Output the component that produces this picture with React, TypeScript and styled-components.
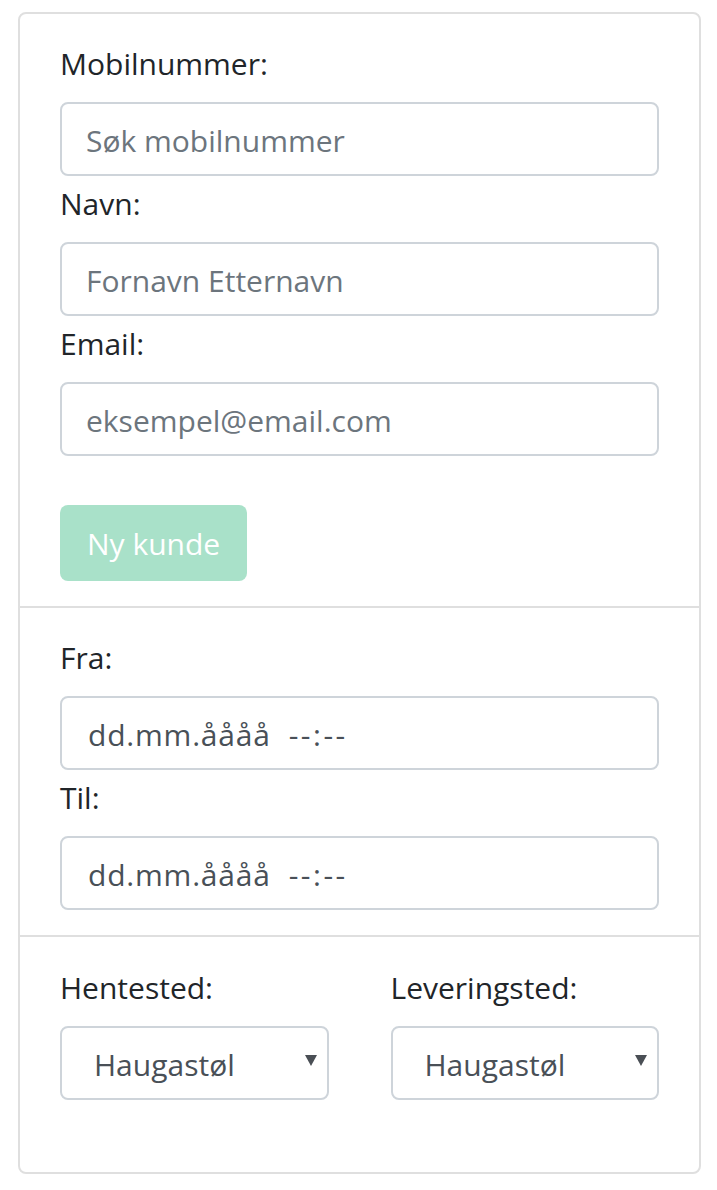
import React from "react";
import styled, { createGlobalStyle } from "styled-components";

const FONT = `"Open Sans", "Noto Sans", "Liberation Sans", sans-serif`;

const GlobalStyle = createGlobalStyle`
  html, body {
    margin: 0;
    padding: 0;
    background: #ffffff;
  }
  body {
    font-family: ${FONT};
    color: #212529;
  }
  * { box-sizing: border-box; }
`;

const Page = styled.div`
  padding: 12px 16px 17px 18px;
`;

const Card = styled.div`
  border: 2px solid #dfdfdf;
  border-radius: 8px;
  background: #fff;
`;

const Section = styled.div<{ $divider?: boolean; $pt: number; $pb: number }>`
  padding: ${(p) => p.$pt}px 40px ${(p) => p.$pb}px;
  border-top: ${(p) => (p.$divider ? "2px solid #dfdfdf" : "none")};
  display: flex;
  flex-direction: column;
`;

const Field = styled.div<{ $gapAfter?: number }>`
  display: flex;
  flex-direction: column;
  margin-bottom: ${(p) => p.$gapAfter ?? 0}px;
`;

const Label = styled.label`
  font-family: ${FONT};
  font-size: 30px;
  line-height: 45px;
  color: #212529;
  margin-bottom: 16px;
`;

const TextInput = styled.input`
  height: 74px;
  width: 100%;
  border: 2px solid #ced4da;
  border-radius: 8px;
  padding: 2px 24px 0;
  font-family: ${FONT};
  font-size: 30px;
  color: #495057;
  background: #fff;
  outline: none;
  &::placeholder {
    color: #6c757d;
    opacity: 1;
  }
`;

const DateBox = styled.div`
  height: 74px;
  width: 100%;
  border: 2px solid #ced4da;
  border-radius: 8px;
  padding: 2px 26px 0;
  display: flex;
  align-items: center;
  gap: 18px;
  font-family: ${FONT};
  font-size: 30px;
  color: #495057;
`;

const DatePart = styled.span<{ $spacing: number }>`
  letter-spacing: ${(p) => p.$spacing}px;
`;

const Button = styled.button`
  align-self: flex-start;
  height: 76px;
  padding: 0 27px;
  border: none;
  border-radius: 8px;
  background: #a9e1c9;
  color: #ffffff;
  font-family: ${FONT};
  font-size: 30px;
  cursor: default;
`;

const Columns = styled.div`
  display: grid;
  grid-template-columns: 1fr 1fr;
  column-gap: 62px;
`;

const SelectBox = styled.div`
  height: 74px;
  border: 2px solid #ced4da;
  border-radius: 8px;
  padding: 2px 10px 0 32px;
  display: flex;
  align-items: center;
  justify-content: space-between;
  font-family: ${FONT};
  font-size: 30px;
  color: #495057;
`;

const Caret = () => (
  <svg width="12" height="11" viewBox="0 0 12 11" style={{ marginTop: -8 }}>
    <polygon points="0,0 12,0 6,11" fill="#4a4f55" />
  </svg>
);

export default function App() {
  return (
    <>
      <GlobalStyle />
      <Page>
        <Card>
          <Section $pt={27} $pb={25}>
            <Field $gapAfter={5}>
              <Label>Mobilnummer:</Label>
              <TextInput placeholder="Søk mobilnummer" />
            </Field>
            <Field $gapAfter={5}>
              <Label>Navn:</Label>
              <TextInput placeholder="Fornavn Etternavn" />
            </Field>
            <Field $gapAfter={49}>
              <Label>Email:</Label>
              <TextInput placeholder="eksempel@email.com" />
            </Field>
            <Button disabled>Ny kunde</Button>
          </Section>
          <Section $divider $pt={27} $pb={25}>
            <Field $gapAfter={5}>
              <Label>Fra:</Label>
              <DateBox>
                <DatePart $spacing={0.8}>dd.mm.åååå</DatePart>
                <DatePart $spacing={2.5}>--:--</DatePart>
              </DateBox>
            </Field>
            <Field>
              <Label>Til:</Label>
              <DateBox>
                <DatePart $spacing={0.8}>dd.mm.åååå</DatePart>
                <DatePart $spacing={2.5}>--:--</DatePart>
              </DateBox>
            </Field>
          </Section>
          <Section $divider $pt={28} $pb={72}>
            <Columns>
              <Field>
                <Label>Hentested:</Label>
                <SelectBox>
                  <span>Haugastøl</span>
                  <Caret />
                </SelectBox>
              </Field>
              <Field>
                <Label>Leveringsted:</Label>
                <SelectBox>
                  <span>Haugastøl</span>
                  <Caret />
                </SelectBox>
              </Field>
            </Columns>
          </Section>
        </Card>
      </Page>
    </>
  );
}
